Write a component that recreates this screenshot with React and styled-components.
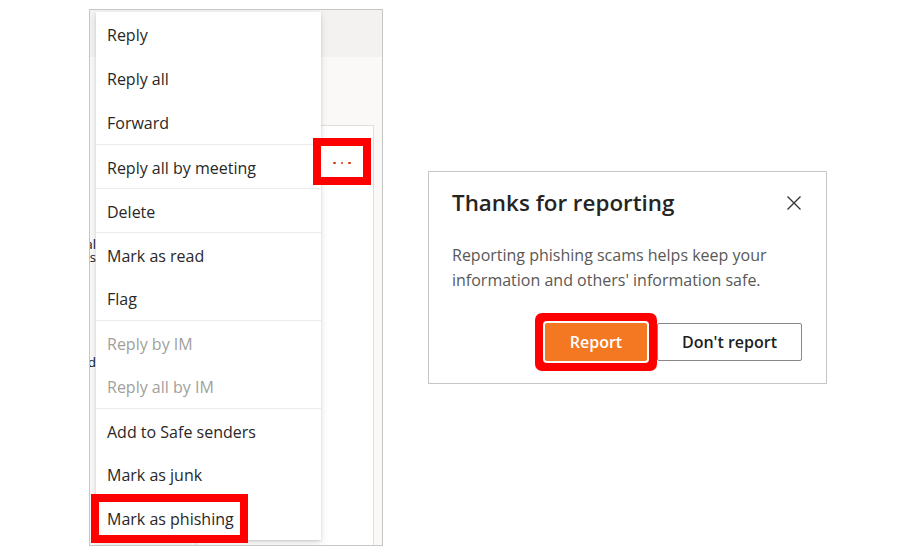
import React from 'react'
import styled, { createGlobalStyle } from 'styled-components'

const GlobalStyle = createGlobalStyle`
  * { box-sizing: border-box; }
  body {
    margin: 0;
    background: #fff;
    font-family: "Open Sans", "Noto Sans", sans-serif;
  }
`;

// LAYOUT
const Page = styled.div`
  display: flex;
  align-items: flex-start;
  gap: 45px;
  padding: 9px 0 0 89px;
  height: 554px;
`;

// LEFT: OUTLOOK WINDOW WITH CONTEXT MENU
const Frame = styled.div`
  position: relative;
  width: 294px;
  height: 537px;
  border: 1px solid #c6c6c6;
  overflow: hidden;
  display: flex;
  flex-direction: column;
`;

const Header = styled.div`
  height: 47px;
  background: #f3f2f1;
`;

const Body = styled.div`
  flex: 1;
  display: flex;
  background: #faf9f8;
`;

const Strip = styled.div`
  width: 6px;
  display: flex;
  flex-direction: column;
  padding-top: 181px;
`;

const Fragment = styled.div`
  display: flex;
  justify-content: flex-end;
  margin-top: ${p => p.$gap || 0}px;
  font-size: 13px;
  line-height: 13px;
  color: #111;
  white-space: nowrap;
`;

const CardArea = styled.div`
  flex: 1;
  display: flex;
  padding: 68px 8px 0 100px;
`;

const Card = styled.div`
  flex: 1;
  display: flex;
  justify-content: flex-end;
  align-items: flex-start;
  padding: 20px 10px 0 0;
  background: #fff;
  border: 1px solid #e1dfdd;
  border-bottom: none;
`;

const MoreButton = styled.div`
  position: relative;
  z-index: 2;
  width: 42px;
  height: 31px;
  display: flex;
  align-items: center;
  justify-content: center;
  gap: 5px;
  padding-top: 3px;
  background: #fff;
  box-shadow: 0 0 0 8px #ff0000;
`;

const Dot = styled.span`
  width: 2.5px;
  height: 2.5px;
  border-radius: 50%;
  background: #d83b01;
`;

const Menu = styled.div`
  position: absolute;
  z-index: 1;
  top: 2px;
  left: 6px;
  width: 225px;
  background: #fff;
  box-shadow: 0 3.2px 7.2px rgba(0, 0, 0, 0.13), 0 0.6px 1.8px rgba(0, 0, 0, 0.11);
`;

const Item = styled.div`
  position: relative;
  height: 44px;
  display: flex;
  align-items: center;
  padding: 2px 11px 0;
  font-size: 16px;
  color: ${p => (p.$disabled ? '#a19f9d' : '#292827')};
  border-top: ${p => (p.$sep ? '1px solid #edebe9' : 'none')};
`;

const Highlight = styled.span`
  position: absolute;
  left: -5px;
  top: -2px;
  width: 157px;
  height: 49px;
  border: 8px solid #ff0000;
`;

// RIGHT: DIALOG
const Dialog = styled.div`
  margin-top: 162px;
  width: 399px;
  height: 213px;
  border: 1px solid #c8c6c4;
  padding: 16px 24px 22px 23px;
  display: flex;
  flex-direction: column;
`;

const TitleRow = styled.div`
  display: flex;
  align-items: center;
  justify-content: space-between;
`;

const Title = styled.span`
  font-size: 22.4px;
  line-height: 30px;
  font-weight: 600;
  color: #252423;
`;

const Close = styled.button`
  border: none;
  background: none;
  padding: 0;
  margin-right: 1px;
  width: 14px;
  height: 14px;
  display: flex;
`;

const Text = styled.p`
  margin: 25px 0 0;
  font-size: 16px;
  line-height: 25px;
  color: #5a5856;
`;

const Footer = styled.div`
  margin-top: auto;
  display: flex;
  justify-content: flex-end;
  gap: 10px;
`;

const Button = styled.button`
  width: ${p => (p.$primary ? 102 : 145)}px;
  height: 38px;
  border-radius: 2px;
  font-family: inherit;
  font-size: 16px;
  font-weight: 600;
  color: ${p => (p.$primary ? '#fff' : '#201f1e')};
  background: ${p => (p.$primary ? '#f47721' : '#fff')};
  border: 1px solid ${p => (p.$primary ? '#f47721' : '#8a8886')};
  box-shadow: ${p => (p.$marked ? '0 0 0 2px #fff, 0 0 0 10px #ff0000' : 'none')};
`;

const items = [
  { label: 'Reply' },
  { label: 'Reply all' },
  { label: 'Forward' },
  { label: 'Reply all by meeting', sep: true },
  { label: 'Delete', sep: true },
  { label: 'Mark as read', sep: true },
  { label: 'Flag' },
  { label: 'Reply by IM', sep: true, disabled: true },
  { label: 'Reply all by IM', disabled: true },
  { label: 'Add to Safe senders', sep: true },
  { label: 'Mark as junk' },
  { label: 'Mark as phishing', marked: true },
];

const App = () => {
  return (
    <>
      <GlobalStyle />
      <Page>
        <Frame>
          <Header />
          <Body>
            <Strip>
              <Fragment>al</Fragment>
              <Fragment>s</Fragment>
              <Fragment $gap={92}>d</Fragment>
            </Strip>
            <CardArea>
              <Card>
                <MoreButton>
                  <Dot />
                  <Dot />
                  <Dot />
                </MoreButton>
              </Card>
            </CardArea>
          </Body>
          <Menu>
            {items.map(it => (
              <Item key={it.label} $sep={it.sep} $disabled={it.disabled}>
                {it.label}
                {it.marked && <Highlight />}
              </Item>
            ))}
          </Menu>
        </Frame>

        <Dialog>
          <TitleRow>
            <Title>Thanks for reporting</Title>
            <Close aria-label="Close">
              <svg width="14" height="14" viewBox="0 0 14 14">
                <path d="M0.5 0.5 L13.5 13.5 M13.5 0.5 L0.5 13.5" stroke="#323130" strokeWidth="1.3" fill="none" />
              </svg>
            </Close>
          </TitleRow>
          <Text>
            Reporting phishing scams helps keep your information and others' information safe.
          </Text>
          <Footer>
            <Button $primary $marked>Report</Button>
            <Button>Don't report</Button>
          </Footer>
        </Dialog>
      </Page>
    </>
  )
}

export default App
